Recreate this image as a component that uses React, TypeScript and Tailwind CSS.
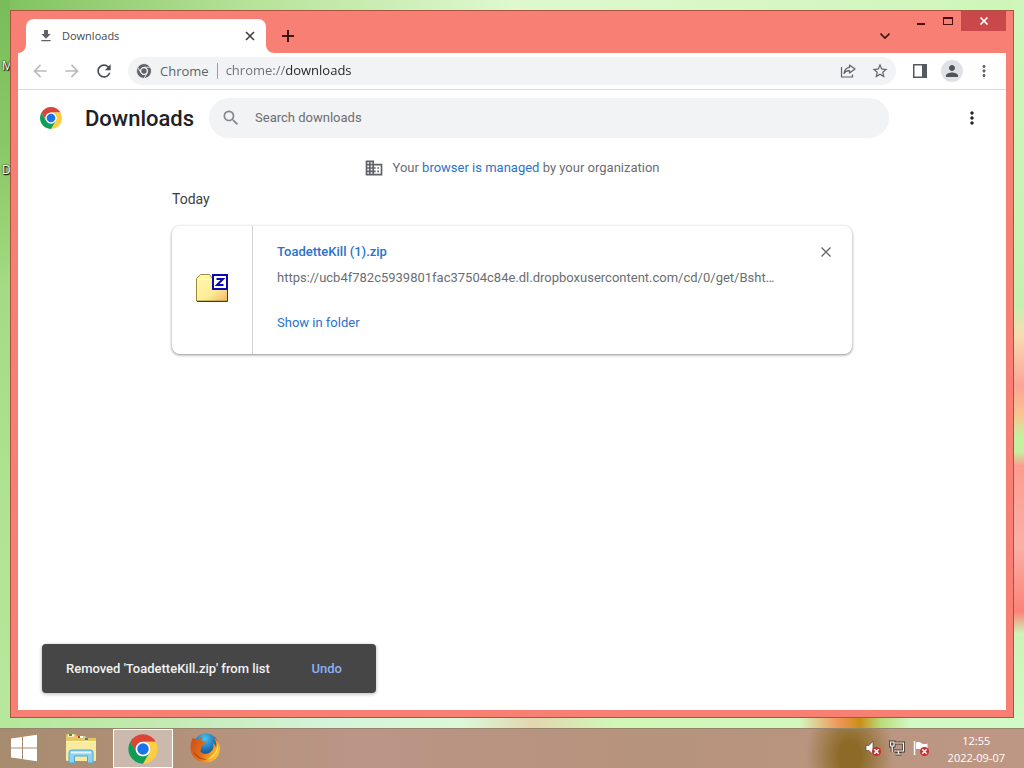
import type { ReactNode } from "react";
import {
  MdArrowBack,
  MdArrowForward,
  MdDomain,
  MdFileDownload,
  MdMoreVert,
  MdPerson,
  MdRefresh,
  MdSearch,
  MdStarBorder,
} from "react-icons/md";

interface IconButtonProps {
  label: string;
  className?: string;
  children: ReactNode;
}

function IconButton({ label, className = "", children }: IconButtonProps) {
  return (
    <button type="button" aria-label={label} className={`flex shrink-0 items-center justify-center ${className}`}>
      {children}
    </button>
  );
}

function ChromeLogo({ className }: { className: string }) {
  return (
    <svg viewBox="0 0 48 48" className={className} aria-hidden="true">
      <path fill="#db4437" d="M4.95 13A22 22 0 0 1 43.05 13H24A11 11 0 0 0 14.47 29.5Z" />
      <path fill="#ffcd40" d="M43.05 13A22 22 0 0 1 24 46L33.53 29.5A11 11 0 0 0 24 13Z" />
      <path fill="#0f9d58" d="M24 46A22 22 0 0 1 4.95 13L14.47 29.5A11 11 0 0 0 33.53 29.5Z" />
      <circle cx="24" cy="24" r="11" fill="#fff" />
      <circle cx="24" cy="24" r="8.6" fill="#1a73e8" />
    </svg>
  );
}

function ChromeMono({ className }: { className: string }) {
  return (
    <svg viewBox="0 0 48 48" className={className} aria-hidden="true">
      <g fill="#5f6368" stroke="#f1f3f4" strokeWidth="2">
        <path d="M4.95 13A22 22 0 0 1 43.05 13H24A11 11 0 0 0 14.47 29.5Z" />
        <path d="M43.05 13A22 22 0 0 1 24 46L33.53 29.5A11 11 0 0 0 24 13Z" />
        <path d="M24 46A22 22 0 0 1 4.95 13L14.47 29.5A11 11 0 0 0 33.53 29.5Z" />
      </g>
      <circle cx="24" cy="24" r="11" fill="#f1f3f4" />
      <circle cx="24" cy="24" r="8" fill="#5f6368" />
    </svg>
  );
}

function ShareIcon() {
  return (
    <svg viewBox="0 0 16 16" className="size-4" fill="none" stroke="#5f6368" strokeWidth="1.2" aria-hidden="true">
      <path d="M1.5 4V14H12.5V11.5" />
      <path strokeLinejoin="round" d="M9.5 2L15 6L9.5 10V7.7C7 7.5 5.3 8.4 4 10.5C4.4 7.2 6.2 4.8 9.5 4.4Z" />
    </svg>
  );
}

function ZipFolder() {
  return (
    <svg viewBox="0 0 32 32" className="size-8" aria-hidden="true">
      <defs>
        <linearGradient id="zip" x1="0" y1="0" x2="1" y2="1">
          <stop offset="0" stopColor="#fffbb0" />
          <stop offset="0.6" stopColor="#fdec96" />
          <stop offset="1" stopColor="#f3b566" />
        </linearGradient>
      </defs>
      <path d="M0.5 27V4.500L4.5 0.500H13.5L16.5 4.500H31.5V27Z" fill="url(#zip)" stroke="#a08a3c" />
      <path d="M1 27.500H31.5V6" fill="none" stroke="#4a3c10" />
      <path d="M1.5 5.500H16" stroke="#fffde0" />
      <rect x="17" y="1" width="14" height="14" fill="#fff" stroke="#0a0ab0" strokeWidth="2" />
      <path d="M20.5 5H27L21 11H27.5" fill="none" stroke="#0a0ab0" strokeWidth="2" />
    </svg>
  );
}

function ExplorerIcon() {
  return (
    <svg viewBox="0 0 32 32" className="size-8" aria-hidden="true">
      <path d="M1 3.5Q1 2 2.5 2H10L12 4H20L22 6H31V28H1Z" fill="#e6c766" />
      <path d="M3 3.5H9M13 5H18" stroke="#fff" strokeWidth="2" />
      <path d="M4 3H7" stroke="#3d9a46" strokeWidth="2" />
      <path d="M13 5H15" stroke="#c8402f" strokeWidth="2" />
      <path d="M20 7H23" stroke="#3f82c4" strokeWidth="2" />
      <path d="M1 9H31V28Q31 29 30 29H2Q1 29 1 28Z" fill="#f8eba0" />
      <path d="M1 9.5H31" stroke="#fffbd5" />
      <path d="M4 31V20.500Q4 18 6.500 18H25.500Q28 18 28 20.500V31H22.500V24H9.500V31Z" fill="#8ed2f2" stroke="#4fa6d6" />
      <path d="M6 20.500H26" stroke="#dff5ff" strokeWidth="2" />
    </svg>
  );
}

function FirefoxIcon() {
  return (
    <svg viewBox="0 0 32 32" className="size-8" aria-hidden="true">
      <defs>
        <radialGradient id="globe" cx="0.45" cy="0.2" r="0.8">
          <stop offset="0" stopColor="#4cc3ee" />
          <stop offset="0.5" stopColor="#2276b8" />
          <stop offset="1" stopColor="#12305f" />
        </radialGradient>
        <linearGradient id="fox" x1="0" y1="0" x2="1" y2="0.5">
          <stop offset="0" stopColor="#c94d18" />
          <stop offset="0.6" stopColor="#e4711c" />
          <stop offset="1" stopColor="#fbc234" />
        </linearGradient>
      </defs>
      <circle cx="17" cy="14.500" r="13" fill="url(#globe)" />
      <path
        fill="url(#fox)"
        d="M4 5.500C5 7 7 7.500 9 7.500C10.500 6 12 5.500 13.500 5.500C12.500 7 12.500 8 13 9C15 9.500 16.500 10 16.500 11C15.500 12.500 13.500 13 12.500 14.500C12.500 17 11.500 18 11.500 19.500C13.500 22 17 22.500 20 21C23.500 19 25.500 15.500 24 11C26 12.500 26.800 14 27 16C28 11.500 26.500 8 24.500 5C29 8 31.200 12.500 31 17C30.500 25 24.500 30.500 17 30.500C8.500 30.500 2 25 1.500 16.500C1.300 12 2.500 8.500 4 5.500Z"
      />
      <path d="M28.500 11C30.500 18 26 26 18 27.500C25.500 23.500 28.500 18 28.500 11Z" fill="#ffe25c" />
      <path d="M4 19C6 25 12 28.500 18 27.500C12 26.500 8 24 4 19Z" fill="#b93b17" />
    </svg>
  );
}

function RedCross() {
  return (
    <g>
      <circle cx="11.500" cy="11.500" r="4.500" fill="#d02b2b" />
      <path d="M9.300 9.300L13.700 13.700M13.700 9.300L9.300 13.700" stroke="#fff" strokeWidth="1.600" />
    </g>
  );
}

function TitleBar() {
  return (
    <header className="flex h-[42px] items-end">
      <div className="relative ml-2 flex h-[34px] w-60 items-center rounded-t-lg bg-white pr-2 pl-3">
        <svg viewBox="0 0 8 8" className="absolute bottom-0 -left-2 size-2" aria-hidden="true">
          <path d="M8 0V8H0A8 8 0 0 0 8 0Z" fill="#fff" />
        </svg>
        <svg viewBox="0 0 8 8" className="absolute -right-2 bottom-0 size-2" aria-hidden="true">
          <path d="M0 0V8H8A8 8 0 0 1 0 0Z" fill="#fff" />
        </svg>
        <MdFileDownload className="size-4 text-[#5f6368]" />
        <span className="ml-2 flex-1 text-[11px] text-[#45494d]">Downloads</span>
        <IconButton label="Close tab" className="size-4">
          <svg viewBox="0 0 10 10" className="size-2.5" stroke="#3c4043" strokeWidth="1.6" aria-hidden="true">
            <path d="M1 1L9 9M9 1L1 9" />
          </svg>
        </IconButton>
      </div>
      <IconButton label="New tab" className="ml-2 h-[34px] w-7">
        <svg viewBox="0 0 12 12" className="size-3" stroke="#3b1614" strokeWidth="2" aria-hidden="true">
          <path d="M6 0V12M0 6H12" />
        </svg>
      </IconButton>
      <IconButton label="Search tabs" className="mr-2 ml-auto h-[34px] w-7">
        <svg viewBox="0 0 10 10" className="size-2.5" fill="none" stroke="#3b1614" strokeWidth="1.6" aria-hidden="true">
          <path d="M0.500 2.500L5 7L9.500 2.500" />
        </svg>
      </IconButton>
      <div className="flex self-start">
        <IconButton label="Minimize" className="h-5 w-7">
          <svg viewBox="0 0 10 10" className="size-2.5" aria-hidden="true">
            <path d="M1 7H9V9H1Z" fill="#4a120e" />
          </svg>
        </IconButton>
        <IconButton label="Maximize" className="h-5 w-[26px]">
          <svg viewBox="0 0 10 10" className="size-2.5" aria-hidden="true">
            <path d="M0 1H10V9H0ZM1 3V8H9V3Z" fill="#4a120e" fillRule="evenodd" />
          </svg>
        </IconButton>
        <IconButton label="Close" className="h-5 w-[45px] bg-[#c9484c]">
          <svg viewBox="0 0 10 10" className="size-2.5" stroke="#fff" strokeWidth="1.700" aria-hidden="true">
            <path d="M1.500 1.500L8.500 8.500M8.500 1.500L1.500 8.500" />
          </svg>
        </IconButton>
      </div>
    </header>
  );
}

function Toolbar() {
  return (
    <nav className="flex h-[37px] items-center gap-2 border-b border-[#d8dadd] bg-white px-1.5">
      <div className="flex">
        <IconButton label="Back" className="h-7 w-8 text-[#babcbe]">
          <MdArrowBack className="size-5" />
        </IconButton>
        <IconButton label="Forward" className="h-7 w-8 text-[#babcbe]">
          <MdArrowForward className="size-5" />
        </IconButton>
        <IconButton label="Reload" className="h-7 w-8 text-[#4a4d51]">
          <MdRefresh className="size-5" />
        </IconButton>
      </div>
      <div className="flex h-7 min-w-0 flex-1 items-center rounded-full bg-[#f1f3f4] pl-2">
        <ChromeMono className="size-4" />
        <label htmlFor="address" className="ml-2 border-r border-[#9aa0a6] pr-2 text-[13px] leading-4 text-[#5f6368]">
          Chrome
        </label>
        <input
          id="address"
          type="text"
          defaultValue="chrome://downloads"
          className="min-w-0 flex-1 bg-[linear-gradient(90deg,#6b6f74_67px,#202124_67px)] bg-clip-text pl-2 text-[13px] text-transparent outline-none"
        />
        <IconButton label="Share this page" className="h-7 w-8">
          <ShareIcon />
        </IconButton>
        <IconButton label="Bookmark this tab" className="h-7 w-8 text-[#5f6368]">
          <MdStarBorder className="size-[18px]" />
        </IconButton>
      </div>
      <div className="flex">
        <IconButton label="Side panel" className="h-7 w-8">
          <svg viewBox="0 0 14 14" className="size-3.5" aria-hidden="true">
            <path d="M0 0H14V14H0ZM1.500 1.500V12.500H9V1.500Z" fill="#55585c" fillRule="evenodd" />
          </svg>
        </IconButton>
        <IconButton label="Profile" className="h-7 w-8">
          <span className="flex size-[22px] items-center justify-center rounded-full bg-[#dee1e8] text-[#50545a]">
            <MdPerson className="size-[18px]" />
          </span>
        </IconButton>
        <IconButton label="Customize and control" className="h-7 w-8 text-[#5f6368]">
          <MdMoreVert className="size-[18px]" />
        </IconButton>
      </div>
    </nav>
  );
}

function DownloadCard() {
  return (
    <article className="flex rounded-lg bg-white shadow-[0_1px_3px_1px_rgba(60,64,67,0.2),0_1px_2px_rgba(60,64,67,0.35)]">
      <div className="flex w-[81px] shrink-0 items-center justify-center border-r border-[#d2d4d7]">
        <ZipFolder />
      </div>
      <div className="min-w-0 flex-1 py-4 pl-6 text-[13px] leading-5">
        <div className="flex items-center justify-between pr-4">
          <a href="#file" className="font-medium text-[#2a72cb]">
            ToadetteKill (1).zip
          </a>
          <IconButton label="Remove from list" className="size-5 text-[#5f6368]">
            <svg viewBox="0 0 10 10" className="size-2.5" stroke="currentColor" strokeWidth="1.300" aria-hidden="true">
              <path d="M0.500 0.500L9.500 9.500M9.500 0.500L0.500 9.500" />
            </svg>
          </IconButton>
        </div>
        <p className="mt-1.5 truncate pr-16 text-[#6a6e73]">
          https://ucb4f782c5939801fac37504c84e.dl.dropboxusercontent.com/cd/0/get/Bsht…
        </p>
        <button type="button" className="mt-[25px] mb-[5px] block text-[#2a72cb]">
          Show in folder
        </button>
      </div>
    </article>
  );
}

function DownloadsPage() {
  return (
    <main className="relative flex-1 bg-white font-[Roboto,sans-serif]">
      <div className="flex h-14 items-center pr-6 pl-[21px]">
        <ChromeLogo className="size-6 shrink-0" />
        <h1 className="ml-[22px] text-[22px] font-medium text-[#202124]">Downloads</h1>
        <div className="ml-[15px] flex h-10 w-full max-w-[680px] items-center rounded-full bg-[#f1f3f4] pl-3">
          <MdSearch className="size-5 shrink-0 text-[#80868b]" />
          <input
            type="search"
            aria-label="Search downloads"
            placeholder="Search downloads"
            className="ml-3.5 min-w-0 flex-1 text-[13px] outline-none placeholder:text-[#6a6e73]"
          />
        </div>
        <IconButton label="More actions" className="ml-auto size-5 text-[#202124]">
          <MdMoreVert className="size-5" />
        </IconButton>
      </div>
      <div className="mx-auto max-w-[680px]">
        <p className="flex h-11 items-center justify-center gap-2 text-[13px] text-[#6a6e73]">
          <MdDomain className="size-5 text-[#5f6368]" />
          <span>
            Your{" "}
            <a href="#managed" className="text-[#2a72cb]">
              browser is managed
            </a>{" "}
            by your organization
          </span>
        </p>
        <h2 className="mb-[18px] text-sm leading-[18px] text-[#3c4043]">Today</h2>
        <DownloadCard />
      </div>
      <div
        role="status"
        className="absolute bottom-[17px] left-6 flex h-[49px] w-[334px] items-center rounded bg-[#464646] pt-px pl-6 text-[13px] font-medium text-[#f1f1f1] shadow-[0_1px_3px_1px_rgba(60,64,67,0.25)]"
      >
        <span>Removed 'ToadetteKill.zip' from list</span>
        <button type="button" className="ml-auto pr-[34px] text-[#8ab0f5]">
          Undo
        </button>
      </div>
    </main>
  );
}

function Taskbar() {
  return (
    <footer className="flex h-10 shrink-0 items-center bg-[radial-gradient(ellipse_44px_60px_at_83%_70%,#8c6b28_25%,#8c6b2800),linear-gradient(90deg,#a68b6e,#b4927c_20%,#bb9586_35%,#b6937c_65%,#bd9784)] shadow-[inset_0_1px_0_#94836d]">
      <IconButton label="Start" className="h-full w-12">
        <svg viewBox="0 0 28 28" className="size-7" fill="#fff" aria-hidden="true">
          <path d="M1 4.500L12 3V13.500H1ZM13 2.800L27 0.800V13.500H13ZM1 14.500H12V25L1 23.500ZM13 14.500H27V27.200L13 25.200Z" />
        </svg>
      </IconButton>
      <IconButton label="File Explorer" className="h-full w-[65px]">
        <ExplorerIcon />
      </IconButton>
      <IconButton label="Google Chrome" className="h-[39px] w-[60px] self-end border border-white bg-[#cbb9ae]">
        <ChromeLogo className="size-8" />
      </IconButton>
      <IconButton label="Firefox" className="ml-[2px] h-full w-[60px]">
        <FirefoxIcon />
      </IconButton>
      <div className="ml-auto flex items-center gap-2 pr-[19px]">
        <IconButton label="Volume muted" className="size-4">
          <svg viewBox="0 0 16 16" className="size-4" aria-hidden="true">
            <path d="M1 5.500H4L8 1V14.500L4 10.500H1Z" fill="#fff" stroke="#5a4638" strokeWidth="0.700" />
            <RedCross />
          </svg>
        </IconButton>
        <IconButton label="Network" className="size-4">
          <svg viewBox="0 0 16 16" className="size-4" fill="none" aria-hidden="true">
            <g stroke="#4a382c" strokeWidth="3">
              <path d="M6 3H14.500V11H5M9.500 11V14M6.500 14H12.500M1.500 2H5V6H1.500ZM3.200 6V12" />
            </g>
            <g stroke="#fff" strokeWidth="1.200">
              <path d="M6 3H14.500V11H5M9.500 11V14M6.500 14H12.500M1.500 2H5V6H1.500ZM3.200 6V12" />
            </g>
          </svg>
        </IconButton>
        <IconButton label="Action Center" className="size-4">
          <svg viewBox="0 0 16 16" className="size-4" aria-hidden="true">
            <path d="M1.500 1V15" stroke="#fff" strokeWidth="1.500" />
            <path d="M3 2.500C5 1.500 7 2 8.500 3.200C10.500 4.500 12.500 4.200 14.500 3.500V9.500C12 10.500 10 10.500 8 9.500C6 8.500 4.500 8.500 3 9Z" fill="#fff" />
            <RedCross />
          </svg>
        </IconButton>
      </div>
      <time dateTime="2022-09-07T12:55" className="mr-[19px] pt-0.5 text-center text-[11px] leading-[17px] text-white">
        12:55
        <br />
        2022-09-07
      </time>
    </footer>
  );
}

// first letters of desktop shortcuts that peek out beside the window
const shortcuts = [
  { name: "M", className: "top-[58px]" },
  { name: "D", className: "top-[162px]" },
];

export default function App() {
  return (
    <div className="flex h-screen flex-col overflow-hidden bg-[linear-gradient(90deg,#7fc25c,#b7e39a_25%,#dff8cf_50%,#cdf6b8)] font-['Open_Sans',sans-serif]">
      <div className="relative flex min-h-0 flex-1 flex-col p-2.5">
        <div className="absolute inset-y-0 left-0 w-2.5 bg-[linear-gradient(#78bd58,#8cc968_22%,#a3dc84_40%,#afe393_70%,#b8e89c)]" />
        <div className="absolute inset-y-0 right-0 w-2.5 bg-[linear-gradient(#d0f7bb,#c6f0b0_42%,#f8dcb0_46%,#fba596_53%,#f9c490_57%,#c4f0a0_60%,#c4f0a0_62%,#fd9c90_64%,#fab0a6_75%,#fc8278_84%,#cdf3b8_87%,#d2fac6)]" />
        <div className="absolute inset-x-0 bottom-0 h-2.5 bg-[linear-gradient(90deg,#b4e89a,#c2eab0_15%,#d4f4da_32%,#dcf8d8_45%,#e4d6b0_52%,#cff8b8_60%,#d2f8c0_78%,#f09454_82%,#c99018_84%,#b8dc78_86%,#d2fac6_89%)]" />
        {shortcuts.map((s) => (
          <span
            key={s.name}
            className={`absolute left-0.5 text-xs leading-4 text-white [text-shadow:0_0_2px_#000,1px_1px_1px_#000] ${s.className}`}
          >
            {s.name}
          </span>
        ))}
        <div className="relative flex flex-1 flex-col border border-[#a8553f] bg-[#f77f73] px-[7px] pb-[7px]">
          <TitleBar />
          <Toolbar />
          <DownloadsPage />
        </div>
      </div>
      <Taskbar />
    </div>
  );
}
